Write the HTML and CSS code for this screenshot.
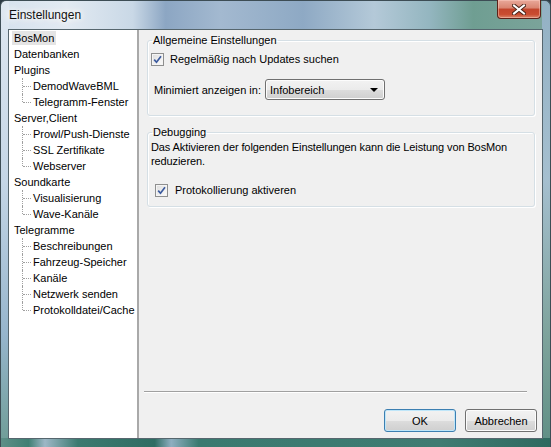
FILE: index.html
```html
<!DOCTYPE html>
<html lang="de">
<head>
    <meta charset="UTF-8">
    <title>Einstellungen</title>
    <link rel="stylesheet" href="styles.css">
</head>
<body>
    <div class="window">
        <!-- Title bar -->
        <div class="titlebar">
            <span class="title">Einstellungen</span>
            <div class="close">
                <svg width="14" height="11" viewBox="0 0 14 11">
                    <path d="M2 1.5 L12 9.5 M12 1.5 L2 9.5" stroke="#4a2418" stroke-width="4" stroke-linecap="square" fill="none"/>
                    <path d="M2 1.5 L12 9.5 M12 1.5 L2 9.5" stroke="#ffffff" stroke-width="2" stroke-linecap="square" fill="none"/>
                </svg>
            </div>
        </div>

        <div class="client">
            <!-- Navigation tree -->
            <ul class="tree">
                <li class="node"><span class="selected">BosMon</span></li>
                <li class="node">Datenbanken</li>
                <li class="node">Plugins</li>
                <li class="node child">DemodWaveBML</li>
                <li class="node child last">Telegramm-Fenster</li>
                <li class="node">Server,Client</li>
                <li class="node child">Prowl/Push-Dienste</li>
                <li class="node child">SSL Zertifikate</li>
                <li class="node child last">Webserver</li>
                <li class="node">Soundkarte</li>
                <li class="node child">Visualisierung</li>
                <li class="node child last">Wave-Kanäle</li>
                <li class="node">Telegramme</li>
                <li class="node child">Beschreibungen</li>
                <li class="node child">Fahrzeug-Speicher</li>
                <li class="node child">Kanäle</li>
                <li class="node child">Netzwerk senden</li>
                <li class="node child last">Protokolldatei/Cache</li>
            </ul>

            <!-- Settings page -->
            <div class="panel">
                <fieldset class="group general">
                    <legend>Allgemeine Einstellungen</legend>
                    <label class="check-row">
                        <span class="check">
                            <svg width="9" height="9" viewBox="0 0 9 9"><path d="M1.2 4.6 L3.5 7.2 L8 1.2" stroke="#3b5a9e" stroke-width="1.7" fill="none"/></svg>
                        </span>
                        <span>Regelmäßig nach Updates suchen</span>
                    </label>
                    <div class="combo-row">
                        <span class="combo-label">Minimiert anzeigen in:</span>
                        <div class="combo">
                            <span>Infobereich</span>
                            <span class="arrow"></span>
                        </div>
                    </div>
                </fieldset>

                <fieldset class="group debug">
                    <legend>Debugging</legend>
                    <p class="note">Das Aktivieren der folgenden Einstellungen kann die Leistung von BosMon reduzieren.</p>
                    <label class="check-row">
                        <span class="check">
                            <svg width="9" height="9" viewBox="0 0 9 9"><path d="M1.2 4.6 L3.5 7.2 L8 1.2" stroke="#3b5a9e" stroke-width="1.7" fill="none"/></svg>
                        </span>
                        <span>Protokollierung aktiveren</span>
                    </label>
                </fieldset>

                <div class="spacer"></div>
                <div class="separator"></div>

                <div class="buttons">
                    <button class="button default">OK</button>
                    <button class="button">Abbrechen</button>
                </div>
            </div>
        </div>
    </div>
</body>
</html>
```

FILE: styles.css
```css
* {
    margin: 0;
    padding: 0;
    box-sizing: border-box;
}

body {
    width: 551px;
    height: 447px;
    overflow: hidden;
    font-family: "Liberation Sans", Arial, sans-serif;
    font-size: 11px;
    color: #000;
    background: #2c3a44;
}

.window {
    height: 447px;
    display: flex;
    flex-direction: column;
    padding: 0 7px 8px 7px;
    border: 1px solid #3d4d55;
    border-bottom: none;
    border-radius: 6px 6px 0 0;
    background:
        linear-gradient(to right, #5d8f87 0%, #3f7f73 5%, #9db7c6 8%, #3c7a70 14%, #2f6d63 28%, #8eaec0 31%, #3a7a70 36%, #3f7c72 80%, #2f6a60 100%) bottom / 100% 9px no-repeat,
        linear-gradient(to bottom, #dfe8f1 0%, #c5d6e6 40%, #96b5cc 75%, #6e9c95 100%) left / 8px 100% no-repeat,
        linear-gradient(to bottom, #93b1c4 0%, #a5bfcf 40%, #7ea39c 75%, #5f8f85 100%) right / 8px 100% no-repeat,
        linear-gradient(to right, #d6e2ee 0%, #e2eaf2 12%, #c9d8e6 24%, #8ca6c3 30%, #a3b9d0 40%, #8ea9c4 55%, #b4c9d8 68%, #94b6c0 78%, #6f9e92 86%, #7ca49b 100%);
}

/* Title bar */

.titlebar {
    height: 28px;
    display: flex;
    justify-content: space-between;
    align-items: flex-start;
}

.title {
    margin-top: 7px;
    margin-left: 1px;
    font-size: 12px;
    line-height: 15px;
    color: #111;
    text-shadow: 0 0 6px #fff, 0 0 10px #fff, 0 0 12px rgba(255, 255, 255, 0.9);
}

.close {
    width: 44px;
    height: 19px;
    margin-right: 2px;
    margin-top: -1px;
    display: flex;
    align-items: center;
    justify-content: center;
    border: 1px solid #5c2118;
    border-top: none;
    border-radius: 0 0 4px 4px;
    background: linear-gradient(to bottom, #e9a99a 0%, #d98470 45%, #c2452c 50%, #c94c30 80%, #d9866a 100%);
    box-shadow: inset 0 0 0 1px rgba(255, 210, 200, 0.45);
}

/* Client area */

.client {
    flex: 1;
    display: flex;
    border: 1px solid #56666e;
    background: #f0f0f0;
}

.tree {
    width: 130px;
    list-style: none;
    background: #fff;
    border-right: 2px solid #a9a9a9;
}

.node {
    position: relative;
    height: 16px;
    line-height: 16px;
    padding-left: 5px;
    white-space: nowrap;
}

.node .selected {
    display: inline-block;
    margin-left: -2px;
    padding: 0 2px;
    margin-top: 1px;
    line-height: 14px;
    background: #e4e4e4;
}

.node.child {
    padding-left: 24px;
}

.node.child::before {
    content: "";
    position: absolute;
    left: 13px;
    top: 0;
    height: 16px;
    border-left: 1px dotted #a0a0a0;
}

.node.child.last::before {
    height: 8px;
}

.node.child::after {
    content: "";
    position: absolute;
    left: 14px;
    top: 8px;
    width: 8px;
    border-top: 1px dotted #a0a0a0;
}

/* Settings panel */

.panel {
    flex: 1;
    display: flex;
    flex-direction: column;
    padding: 3px 7px 6px 8px;
}

.group {
    border: 1px solid #d5dfe5;
    border-radius: 3px;
    box-shadow: inset 1px 1px 0 #fff, 1px 1px 0 #fff;
    padding: 0 3px;
    min-width: 0;
}

.group legend {
    line-height: 14px;
    padding: 0 1px;
    margin-left: 1px;
}

.general {
    padding-bottom: 15px;
}

.debug {
    margin-top: 9px;
    padding-bottom: 8px;
}

.check-row {
    display: flex;
    align-items: center;
    height: 16px;
    margin-top: 4px;
}

.check {
    width: 13px;
    height: 13px;
    margin-right: 6px;
    display: flex;
    align-items: center;
    justify-content: center;
    border: 1px solid #8e8f8f;
    background: linear-gradient(135deg, #dcdcdc 0%, #f0f0f0 60%, #fbfbfb 100%);
    box-shadow: inset 0 0 0 1px #f4f4f4;
}

.debug .check-row {
    margin-top: 14px;
    margin-left: 4px;
}

.debug .check {
    margin-right: 7px;
}

.combo-row {
    display: flex;
    align-items: center;
    margin-top: 12px;
    margin-left: 3px;
}

.combo-label {
    width: 111px;
}

.combo {
    width: 120px;
    height: 21px;
    display: flex;
    align-items: center;
    justify-content: space-between;
    padding: 0 6px 0 4px;
    border: 1px solid #707070;
    border-radius: 3px;
    background: linear-gradient(to bottom, #f2f2f2 0%, #ebebeb 50%, #dddddd 50%, #cfcfcf 100%);
    box-shadow: inset 0 0 0 1px #fcfcfc;
}

.arrow {
    width: 0;
    height: 0;
    border-left: 4px solid transparent;
    border-right: 4px solid transparent;
    border-top: 4px solid #000;
}

.note {
    margin-top: 1px;
    line-height: 14px;
    letter-spacing: -0.1px;
}

.spacer {
    flex: 1;
}

.separator {
    height: 2px;
    margin: 0 8px 16px -3px;
    border-top: 1px solid #a0a0a0;
    border-bottom: 1px solid #fff;
}

.buttons {
    display: flex;
    justify-content: flex-end;
    gap: 9px;
    margin-right: -2px;
}

.button {
    width: 72px;
    height: 23px;
    font-family: "Liberation Sans", Arial, sans-serif;
    font-size: 11px;
    color: #000;
    border: 1px solid #707070;
    border-radius: 3px;
    background: linear-gradient(to bottom, #f2f2f2 0%, #ebebeb 50%, #dddddd 50%, #cfcfcf 100%);
    box-shadow: inset 0 0 0 1px #fcfcfc;
}

.button.default {
    border-color: #3c7fb1;
    box-shadow: inset 0 0 0 1px #bfe6f9;
}
```
